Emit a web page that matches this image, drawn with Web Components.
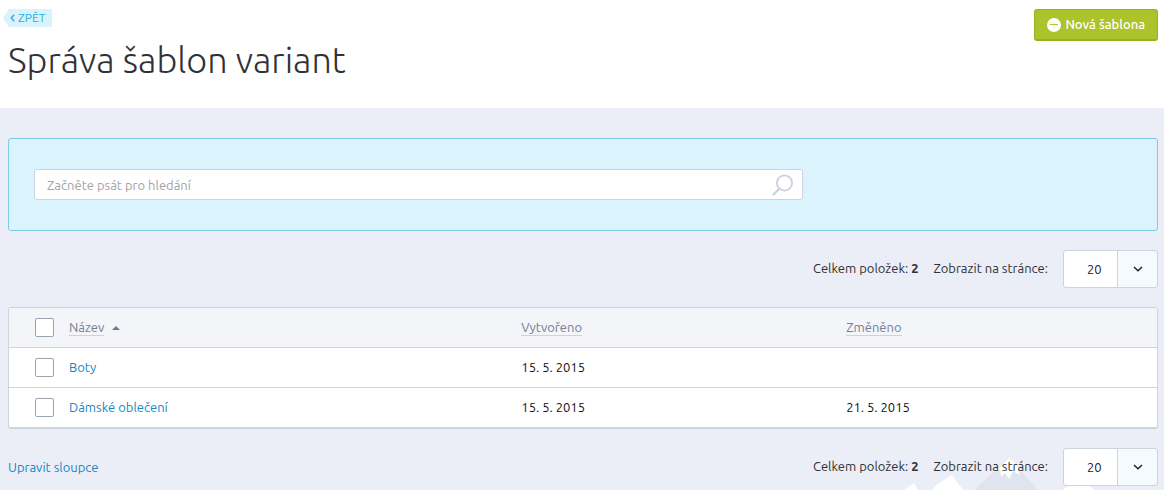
<!DOCTYPE html>
<html lang="cs">
<head>
<meta charset="utf-8">
<meta name="viewport" content="width=device-width, initial-scale=1">
<title>Správa šablon variant</title>
<style>
  html { --line: #ccd4dd; --link: #1489c6; --text: #2f3136; }
  body { margin: 0; font: 13px/20px Ubuntu, "Noto Sans", sans-serif; color: var(--text); background: #ebeef7; }
</style>
</head>
<body>
<variants-page></variants-page>

<template id="variants-page">
  <style>
    :host { display: block; position: relative; min-height: 100vh; box-sizing: border-box; padding-bottom: 4px; }
    header { display: flex; justify-content: space-between; align-items: flex-start; padding: 9px 6px 24px 3px; background: #fff; }
    h1 { margin: 9px 0 0 5px; font: 300 36px/48px Ubuntu, "Open Sans", sans-serif; color: #303236; }
    main { position: relative; padding: 30px 6px 0 8px; }
    .bar { display: flex; justify-content: space-between; align-items: center; margin: 19px 0; }
    .bar.top { justify-content: flex-end; }
    .bar.end { margin-bottom: 0; }
    a { color: var(--link); text-decoration: none; }
  </style>
  <mountain-backdrop></mountain-backdrop>
  <header>
    <div>
      <back-link>ZPĚT</back-link>
      <h1>Správa šablon variant</h1>
    </div>
    <add-button>Nová šablona</add-button>
  </header>
  <main>
    <search-panel></search-panel>
    <div class="bar top"><page-size total="2"></page-size></div>
    <template-table></template-table>
    <div class="bar end"><a href="#columns">Upravit sloupce</a><page-size total="2"></page-size></div>
  </main>
</template>

<template id="mountain-backdrop">
  <style>
    :host { position: absolute; right: 0; bottom: 0; width: 284px; height: 32px; overflow: hidden; }
    svg { display: block; }
  </style>
  <svg width="284" height="32" viewBox="0 0 284 32" aria-hidden="true">
    <path fill="#e0e4ee" d="M94 32 129 0l29 32z"/>
    <path fill="#fff" d="m24 32 10-7 4 7zM52 32l3-4 17-11 11 15zM115 14l14-14 14 14-5-2 2 5-7-4-4 8-4-6-4 4-1-8zM182 32l12-7 12-1 8 8z"/>
  </svg>
</template>

<template id="back-link">
  <style>
    :host { display: flex; }
    a { display: flex; align-items: center; gap: 3px; height: 18px; padding: 0 7px; border-radius: 0 2px 2px 0; background: #d9f3fd; color: #2aade3; font-size: 12px; line-height: 18px; text-decoration: none; clip-path: polygon(0 50%, 6px 0, 100% 0, 100% 100%, 6px 100%); }
  </style>
  <a href="#back"><svg width="5" height="8" viewBox="0 0 5 8" fill="none" stroke="currentColor" stroke-width="1.4" aria-hidden="true"><path d="M4.2.8 1.2 4l3 3.2"/></svg><slot></slot></a>
</template>

<template id="add-button">
  <style>
    :host { display: block; }
    button { display: flex; align-items: center; gap: 4px; height: 32px; padding: 0 12px; border: 1px solid #9cb01f; border-bottom-width: 2px; border-radius: 3px; background: #adc32b; color: #fff; font: 500 13px/20px Ubuntu, "Noto Sans", sans-serif; white-space: nowrap; }
    slot { display: block; padding-bottom: 1px; }
  </style>
  <button type="button"><svg width="14" height="14" viewBox="0 0 14 14" aria-hidden="true"><circle cx="7" cy="7" r="7" fill="#fff"/><path d="M3 6.5h8" stroke="#aec428"/><path d="M7 3v8" stroke="#aec428" opacity=".25"/></svg><slot></slot></button>
</template>

<template id="search-panel">
  <style>
    :host { display: block; padding: 30px 25px; border: 1px solid #7fcae2; border-radius: 3px; background: #daf3fd; }
    form { display: flex; align-items: center; width: 70%; height: 31px; box-sizing: border-box; padding: 0 8px 0 12px; border: 1px solid var(--line); border-radius: 3px; background: #fff; }
    input { flex: 1; min-width: 0; padding: 0; border: 0; outline: 0; background: none; color: inherit; font: inherit; }
    input::placeholder { color: #a3a3a6; opacity: 1; }
    button { display: flex; padding: 0; border: 0; background: none; }
  </style>
  <form role="search">
    <input type="text" aria-label="Hledání" placeholder="Začněte psát pro hledání">
    <button type="button" aria-label="Hledat"><svg width="22" height="22" viewBox="0 0 22 22" fill="none" stroke="#cbd2de" stroke-width="1.8"><circle cx="12.5" cy="9" r="7.6"/><path d="m7.5 14.5-6 6" stroke-width="2.2" stroke-linecap="round"/></svg></button>
  </form>
</template>

<template id="page-size">
  <style>
    :host { display: flex; align-items: center; white-space: nowrap; }
    b { font-weight: 700; }
    .total, label { padding-bottom: 2px; }
    label { margin: 0 15px; }
    .select { display: grid; grid-template-columns: 54px 39px; height: 38px; box-sizing: border-box; width: 95px; border: 1px solid var(--line); border-radius: 3px; overflow: hidden; background: linear-gradient(90deg, #fff 53px, var(--line) 53px, var(--line) 54px, #f4fafd 54px); align-items: center; }
    select { grid-area: 1 / 1 / 2 / 3; width: 93px; height: 36px; padding: 0 40px 0 23px; border: 0; appearance: none; background: none; color: #222; font: inherit; }
    svg { grid-area: 1 / 2; justify-self: center; pointer-events: none; }
  </style>
  <span class="total">Celkem položek: <b></b></span>
  <label for="size">Zobrazit na stránce:</label>
  <span class="select"><select id="size"><option>20</option><option>50</option><option>100</option></select>
    <svg width="10" height="6" viewBox="0 0 10 6" fill="none" stroke="#222" stroke-width="1.5" aria-hidden="true"><path d="m1 1 4 3.7L9 1"/></svg></span>
</template>

<template id="template-table">
  <style>
    :host { display: block; border: 1px solid var(--line); border-bottom-width: 2px; border-radius: 3px; background: #fff; overflow: hidden; }
    table { width: 100%; border-collapse: separate; border-spacing: 0; table-layout: fixed; }
    th, td { height: 37px; padding: 0 0 2px; text-align: left; font-weight: 400; }
    td { border-top: 1px solid var(--line); color: #111; }
    th { background: #f3f5f8; color: #738197; }
    .pick { width: 60px; padding: 0; }
    .pick input { display: block; appearance: none; width: 19px; height: 19px; margin: 0 0 0 26px; border: 1px solid #9ba3b0; border-radius: 2px; background: #fff; box-sizing: border-box; }
    .name { width: 39.4%; }
    .made { width: 28.3%; }
    a { color: var(--link); text-decoration: none; }
    th a { display: inline-block; line-height: 15px; border-bottom: 1px solid #cfd2d6; color: inherit; }
    th svg { margin-left: 8px; vertical-align: 2px; }
  </style>
  <table>
    <thead>
      <tr>
        <th class="pick"><input type="checkbox" aria-label="Vybrat vše"></th>
        <th class="name" aria-sort="ascending"><a href="#name">Název</a><svg width="8" height="4" viewBox="0 0 8 4" fill="#69788f" aria-hidden="true"><path d="M0 4 4 0l4 4z"/></svg></th>
        <th class="made"><a href="#created">Vytvořeno</a></th>
        <th><a href="#changed">Změněno</a></th>
      </tr>
    </thead>
    <tbody>
      <tr><td class="pick"><input type="checkbox" aria-label="Boty"></td><td><a href="#boty">Boty</a></td><td>15. 5. 2015</td><td></td></tr>
      <tr><td class="pick"><input type="checkbox" aria-label="Dámské oblečení"></td><td><a href="#damske">Dámské oblečení</a></td><td>15. 5. 2015</td><td>21. 5. 2015</td></tr>
    </tbody>
  </table>
</template>

<script>
  class TemplateElement extends HTMLElement {
    constructor() {
      super();
      const source = document.getElementById(this.localName);
      this.attachShadow({ mode: "open" }).append(document.importNode(source.content, true));
    }
  }
  for (const name of ["mountain-backdrop", "back-link", "add-button", "search-panel", "template-table"]) {
    customElements.define(name, class extends TemplateElement {});
  }
  customElements.define("page-size", class extends TemplateElement {
    connectedCallback() { this.shadowRoot.querySelector("b").textContent = this.getAttribute("total"); }
  });
  customElements.define("variants-page", class extends TemplateElement {});
</script>
</body>
</html>
